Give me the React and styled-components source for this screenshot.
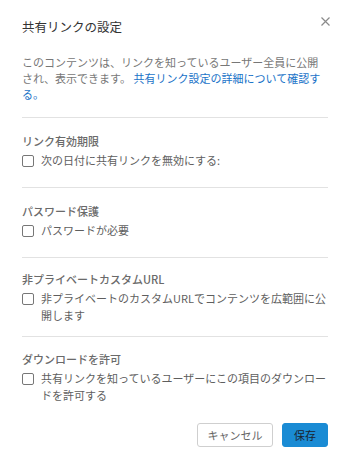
import React from "react";
import styled, { createGlobalStyle } from "styled-components";

const Global = createGlobalStyle`
  html, body { margin: 0; padding: 0; background: #fff; }
  body { font-family: "Noto Sans CJK JP", "Noto Sans", "Liberation Sans", sans-serif; }
`;

const Dialog = styled.div`
  position: relative;
  width: 350px;
  height: 471px;
  box-sizing: border-box;
  padding: 18px 22px;
  background: #fff;
`;

const Title = styled.h2`
  margin: 0;
  font-size: 12.5px;
  line-height: 18px;
  font-weight: 400;
  color: #333;
`;

const Close = styled.button`
  position: absolute;
  top: 15px;
  right: 19px;
  width: 12px;
  height: 12px;
  padding: 0;
  border: 0;
  background: none;
  display: flex;
  align-items: center;
  justify-content: center;
`;

const Description = styled.p`
  margin: 18px 0 15px;
  font-size: 11px;
  line-height: 16px;
  color: #777;
`;

const Link = styled.a`
  color: #1a73c8;
  text-decoration: none;
`;

const Section = styled.section`
  border-top: 1px solid #e2e2e2;
  padding: ${(p) => p.$pt}px 0 ${(p) => p.$pb}px;
`;

const Heading = styled.h3`
  margin: 0;
  font-size: 11px;
  line-height: 16px;
  font-weight: 500;
  color: #6a6a6a;
`;

const Row = styled.label`
  margin-top: 3px;
  display: flex;
  align-items: flex-start;
  gap: 7px;
  font-size: 11px;
  line-height: 17px;
  color: #5e5e5e;
`;

const Box = styled.span`
  flex: none;
  margin-top: 3px;
  width: 10px;
  height: 10px;
  border: 1px solid #777;
  border-radius: 2px;
  background: #fff;
`;

const Footer = styled.div`
  margin-top: 19px;
  display: flex;
  justify-content: flex-end;
  gap: 9px;
`;

const Button = styled.button`
  height: 24px;
  box-sizing: border-box;
  padding: 0;
  width: ${(p) => p.$w}px;
  border-radius: 3px;
  font-family: inherit;
  font-size: 11px;
  border: 1px solid ${(p) => (p.$primary ? "#1a8bd4" : "#cfcfcf")};
  background: ${(p) => (p.$primary ? "#1a8bd4" : "#fff")};
  color: ${(p) => (p.$primary ? "#1b2430" : "#666")};
`;

const sections = [
  { h: "リンク有効期限", t: "次の日付に共有リンクを無効にする:", pt: 15, pb: 18 },
  { h: "パスワード保護", t: "パスワードが必要", pt: 15, pb: 18 },
  { h: "非プライベートカスタムURL", t: "非プライベートのカスタムURLでコンテンツを広範囲に公開します", pt: 13, pb: 12 },
  { h: "ダウンロードを許可", t: "共有リンクを知っているユーザーにこの項目のダウンロードを許可する", pt: 14, pb: 0 },
];

export default function App() {
  return (
    <>
      <Global />
      <Dialog>
        <Title>共有リンクの設定</Title>
        <Close aria-label="閉じる">
          <svg width="9" height="9" viewBox="0 0 9 9">
            <path d="M0.5 0.5L8.5 8.5M8.5 0.5L0.5 8.5" stroke="#8a8a8a" strokeWidth="1.2" />
          </svg>
        </Close>
        <Description>
          このコンテンツは、リンクを知っているユーザー全員に公開され、表示できます。{" "}
          <Link href="#">共有リンク設定の詳細について確認する。</Link>
        </Description>
        {sections.map((s) => (
          <Section key={s.h} $pt={s.pt} $pb={s.pb}>
            <Heading>{s.h}</Heading>
            <Row>
              <Box />
              <span>{s.t}</span>
            </Row>
          </Section>
        ))}
        <Footer>
          <Button $w={76}>キャンセル</Button>
          <Button $w={46} $primary>保存</Button>
        </Footer>
      </Dialog>
    </>
  );
}
